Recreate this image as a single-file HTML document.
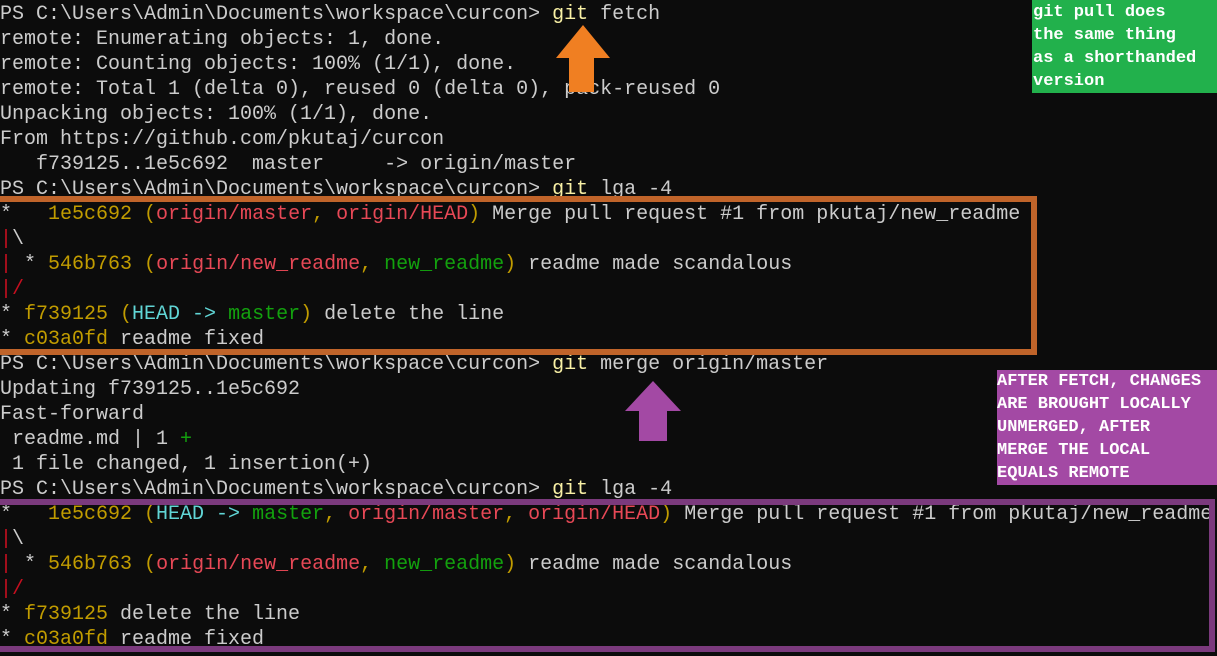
<!DOCTYPE html>
<html><head><meta charset="utf-8"><style>
body{margin:0;width:1217px;height:656px;background:#0c0c0c;overflow:hidden;position:relative;font-family:"Liberation Mono",monospace;}
pre{margin:0;position:absolute;left:0;top:2px;font:20px/25px "Liberation Mono",monospace;color:#cccccc;white-space:pre;}
.y{color:#c19c00}.r{color:#e74856}.g{color:#13a10e}.c{color:#61d6d6}.b{color:#f9f1a5}.dr{color:#c50f1f}
.note{position:absolute;color:#fff;font:bold 17px/23px "Liberation Mono",monospace;white-space:pre;}
</style></head><body>
<pre>PS C:\Users\Admin\Documents\workspace\curcon&gt; <span class="b">git</span> fetch
remote: Enumerating objects: 1, done.
remote: Counting objects: 100% (1/1), done.
remote: Total 1 (delta 0), reused 0 (delta 0), pack-reused 0
Unpacking objects: 100% (1/1), done.
From https://github.com/pkutaj/curcon
   f739125..1e5c692  master     -&gt; origin/master
PS C:\Users\Admin\Documents\workspace\curcon&gt; <span class="b">git</span> lga -4
*   <span class="y">1e5c692 (</span><span class="r">origin/master</span><span class="y">, </span><span class="r">origin/HEAD</span><span class="y">)</span> Merge pull request #1 from pkutaj/new_readme
<span class="dr">|</span>\
<span class="dr">|</span> * <span class="y">546b763 (</span><span class="r">origin/new_readme</span><span class="y">, </span><span class="g">new_readme</span><span class="y">)</span> readme made scandalous
<span class="dr">|/</span>
* <span class="y">f739125 (</span><span class="c">HEAD -&gt; </span><span class="g">master</span><span class="y">)</span> delete the line
* <span class="y">c03a0fd</span> readme fixed
PS C:\Users\Admin\Documents\workspace\curcon&gt; <span class="b">git</span> merge origin/master
Updating f739125..1e5c692
Fast-forward
 readme.md | 1 <span class="g">+</span>
 1 file changed, 1 insertion(+)
PS C:\Users\Admin\Documents\workspace\curcon&gt; <span class="b">git</span> lga -4
*   <span class="y">1e5c692 (</span><span class="c">HEAD -&gt; </span><span class="g">master</span><span class="y">, </span><span class="r">origin/master</span><span class="y">, </span><span class="r">origin/HEAD</span><span class="y">)</span> Merge pull request #1 from pkutaj/new_readme
<span class="dr">|</span>\
<span class="dr">|</span> * <span class="y">546b763 (</span><span class="r">origin/new_readme</span><span class="y">, </span><span class="g">new_readme</span><span class="y">)</span> readme made scandalous
<span class="dr">|/</span>
* <span class="y">f739125</span> delete the line
* <span class="y">c03a0fd</span> readme fixed
</pre>
<div style="position:absolute;left:-6px;top:196px;width:1031px;height:147px;border:6px solid #c0642a;"></div>
<div style="position:absolute;left:-6px;top:499px;width:1209px;height:141px;border:6px solid #7b3a7d;"></div>
<svg style="position:absolute;left:0;top:0" width="1217" height="656">
<polygon points="583,25 610,58 594,58 594,92 569,92 569,58 556,58" fill="#f07f22"/>
<polygon points="653,381 681,411 667,411 667,441 639,441 639,411 625,411" fill="#a349a4"/>
</svg>
<div style="position:absolute;left:1032px;top:0;width:185px;height:93px;background:#22b14c"></div>
<div class="note" style="left:1033px;top:1px">git pull does
the same thing
as a shorthanded
version</div>
<div style="position:absolute;left:997px;top:370px;width:220px;height:115px;background:#a349a4"></div>
<div class="note" style="left:997px;top:370px">AFTER FETCH, CHANGES
ARE BROUGHT LOCALLY
UNMERGED, AFTER
MERGE THE LOCAL
EQUALS REMOTE</div>
</body></html>
